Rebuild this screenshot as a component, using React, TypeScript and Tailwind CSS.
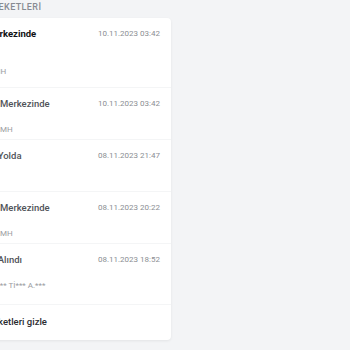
import React from 'react';

interface Movement {
  title: string;
  date: string;
  place: string;
}

const movements: Movement[] = [
  { title: 'Transfer Merkezinde', date: '10.11.2023 03:42', place: 'Hadımköy MH' },
  { title: 'Gönderi Yolda', date: '08.11.2023 21:47', place: 'Ankara' },
  { title: 'Transfer Merkezinde', date: '08.11.2023 20:22', place: 'Hadımköy MH' },
  { title: 'Gönderi Alındı', date: '08.11.2023 18:52', place: 'SEV*** GI*** Tİ*** A.***' },
];

const Row = ({ item }: { item: Movement }) => (
  <div className="flex flex-col border-t border-[#f4f5f6] pt-[8px] pb-[1px] last:pb-[10px] pl-[22px] pr-[11px]">
    <div className="flex items-center justify-between">
      <p className="text-[9.5px] leading-[16px] font-medium text-[#505358] whitespace-nowrap">{item.title}</p>
      <p className="text-[8px] leading-[16px] text-[#8b8e93] whitespace-nowrap">{item.date}</p>
    </div>
    <p className="mt-[10px] text-[8px] leading-[16px] text-[#9a9ca1] whitespace-nowrap">{item.place}</p>
  </div>
);

export default function App() {
  return (
    <div className="w-[350px] h-[350px] overflow-hidden bg-[#f3f4f6] pt-[1px] font-['Roboto',sans-serif]">
      <div className="ml-[-60px] w-[231px]">
        <p className="pl-[5px] mb-[5px] text-[9px] leading-[12px] font-medium tracking-[0.4px] text-[#878b92] whitespace-nowrap">
          KARGO HAREKETLERİ
        </p>
        <div className="flex flex-col rounded-[4px] bg-white shadow-[0_1px_3px_rgba(0,0,0,0.07)]">
          <div className="flex flex-col pt-[8px] pb-[7px] pl-[22px] pr-[11px]">
            <div className="flex items-center justify-between">
              <p className="text-[9.5px] leading-[16px] font-bold text-[#111214] whitespace-nowrap">Şube Merkezinde</p>
              <p className="text-[8px] leading-[16px] text-[#8b8e93] whitespace-nowrap">10.11.2023 03:42</p>
            </div>
            <p className="mt-[3px] text-[8px] leading-[16px] text-[#9a9ca1] whitespace-nowrap">Şube</p>
            <p className="mt-[3px] text-[8px] leading-[16px] text-[#9a9ca1] whitespace-nowrap">Yeşilova MH</p>
          </div>
          <div className="flex flex-col">
            {movements.map((m, i) => (
              <Row key={i} item={m} />
            ))}
          </div>
          <div className="border-t border-[#f4f5f6] pt-[9px] pb-[10px] pl-[18px]">
            <p className="text-[9.5px] leading-[16px] font-medium text-[#2a2c30] whitespace-nowrap">Tüm hareketleri gizle</p>
          </div>
        </div>
      </div>
    </div>
  );
}
